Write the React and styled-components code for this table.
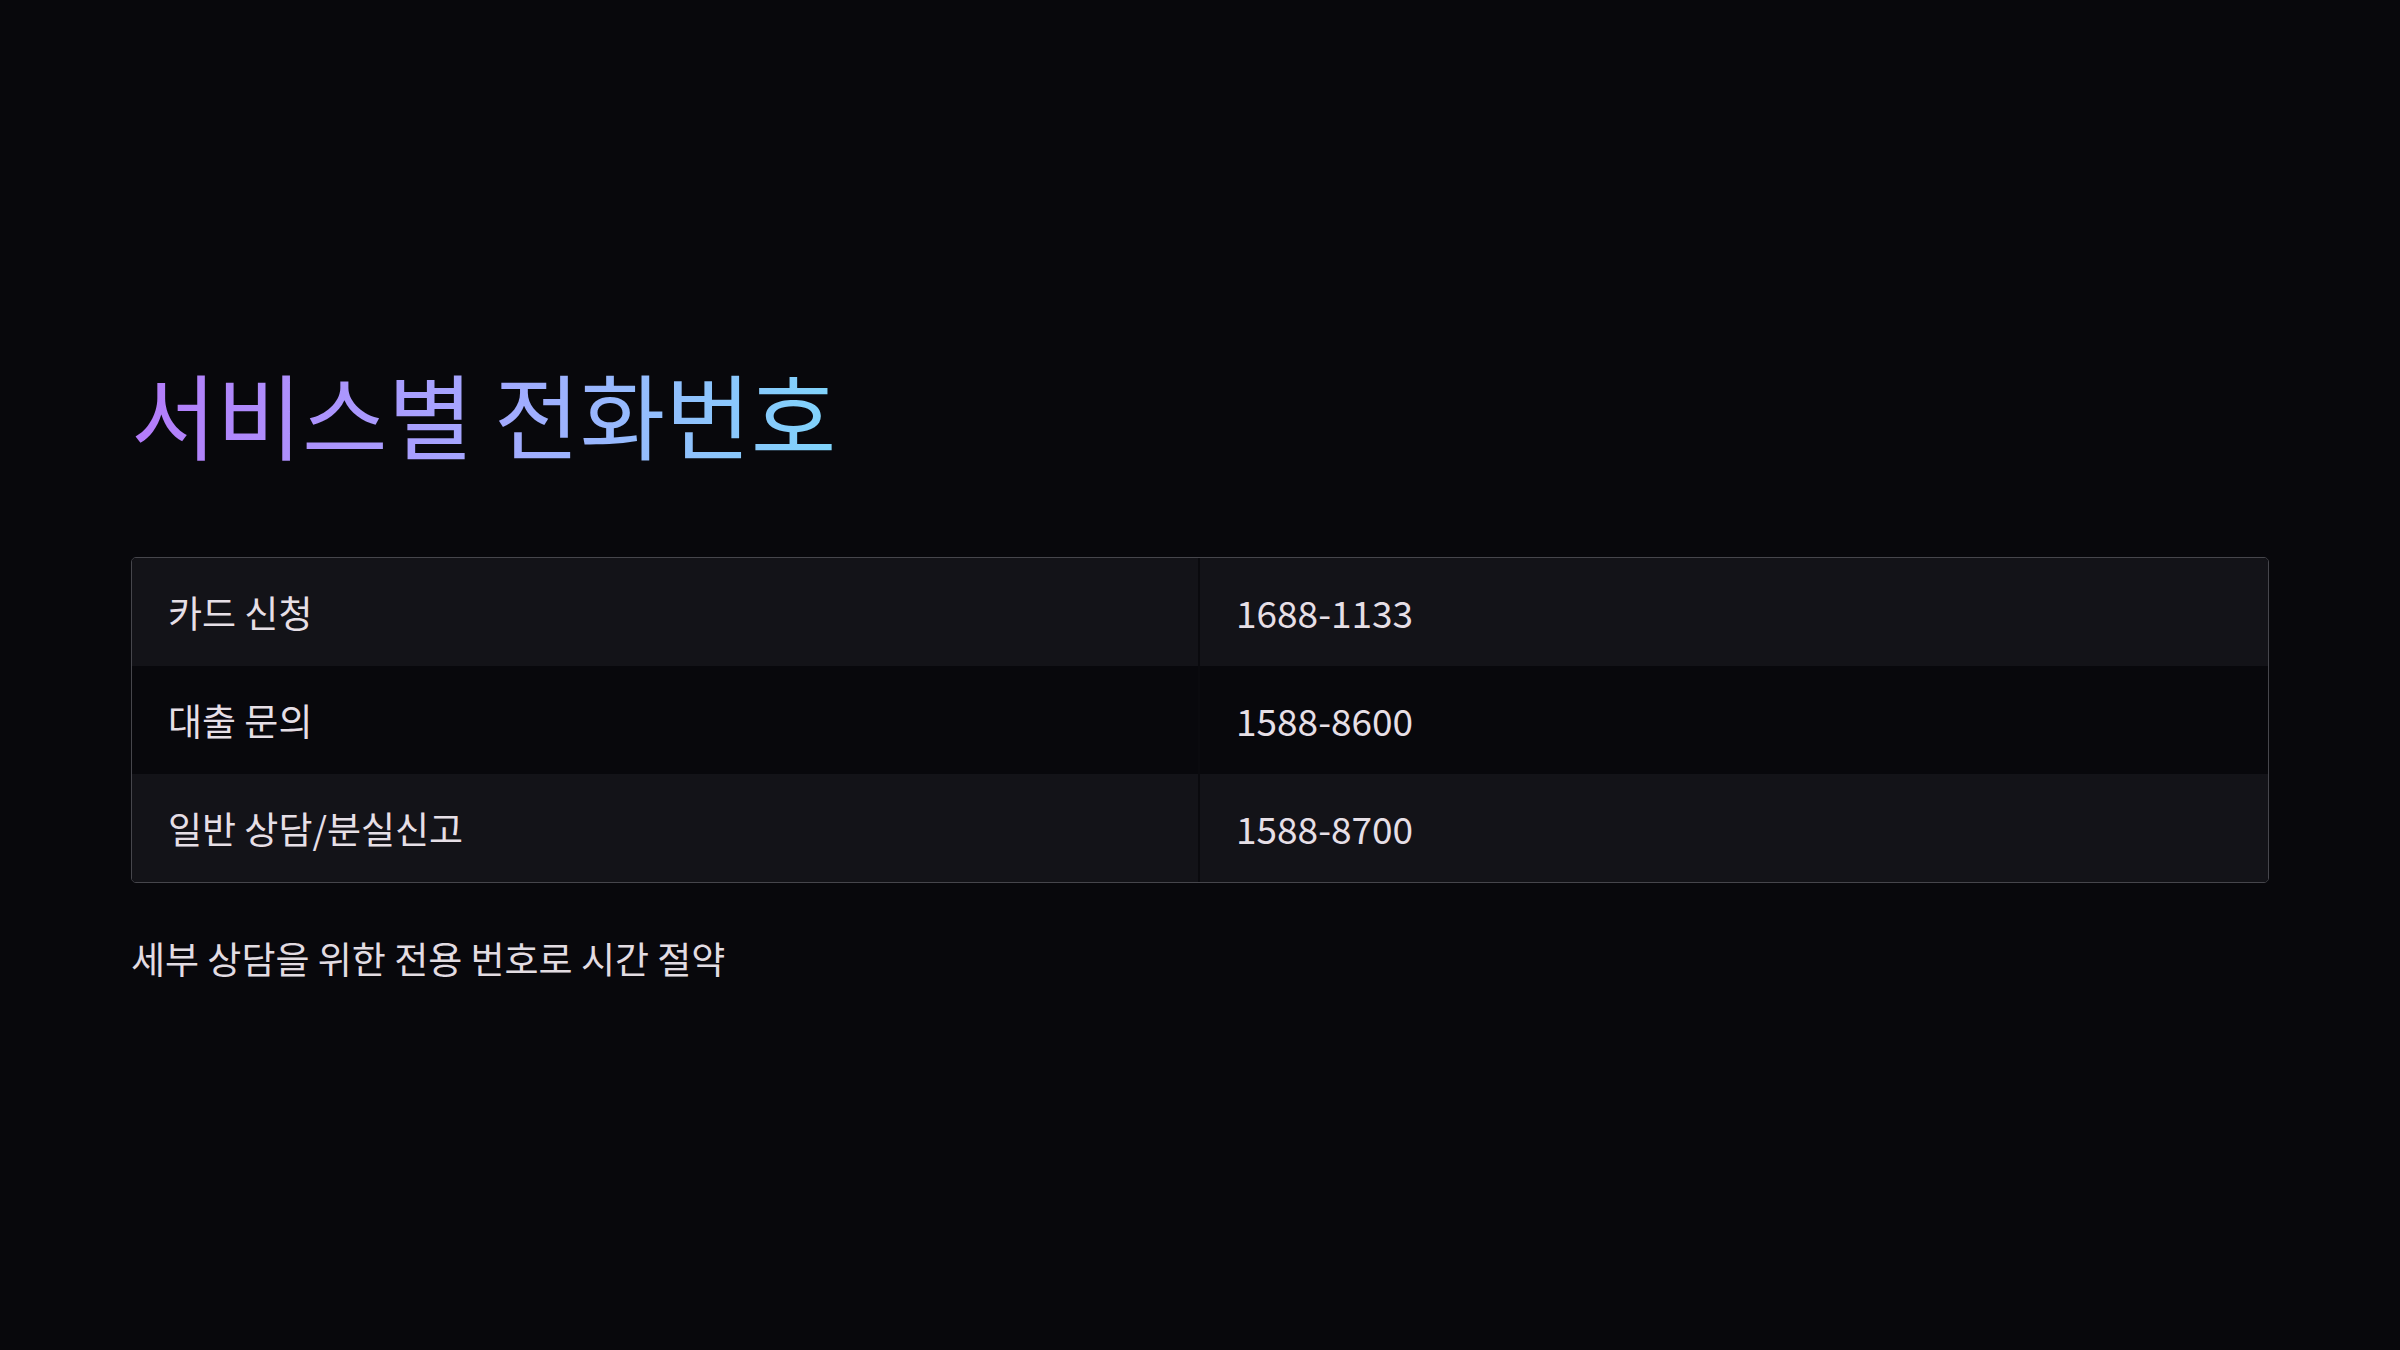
import styled, { createGlobalStyle } from "styled-components";

const rows = [
  { name: "카드 신청", phone: "1688-1133" },
  { name: "대출 문의", phone: "1588-8600" },
  { name: "일반 상담/분실신고", phone: "1588-8700" },
];

const GlobalStyle = createGlobalStyle`
  html, body {
    margin: 0;
    padding: 0;
    background: #08080c;
  }
  body {
    font-family: "Noto Sans CJK KR", "Noto Sans", sans-serif;
    color: #e6dfe6;
  }
`;

const App = () => {
  return (
    <>
      <GlobalStyle />
      <Page>
        <Title>서비스별 전화번호</Title>
        <Table>
          {rows.map((row, i) => (
            <Row key={row.phone} $odd={i % 2 === 0}>
              <Cell $divider>{row.name}</Cell>
              <Cell>{row.phone}</Cell>
            </Row>
          ))}
        </Table>
        <Note>세부 상담을 위한 전용 번호로 시간 절약</Note>
      </Page>
    </>
  );
};

const Page = styled.div`
  min-height: 100vh;
  box-sizing: border-box;
  display: flex;
  flex-direction: column;
  justify-content: center;
  padding: 0 131px 12px;
`;

const Title = styled.h1`
  margin: 0 0 83px;
  font-size: 93px;
  font-weight: 400;
  line-height: 1.3;
  align-self: flex-start;
  background: linear-gradient(90deg, #b47bfa 0%, #a5a8ff 50%, #7fd4fb 100%);
  -webkit-background-clip: text;
  background-clip: text;
  color: transparent;
`;

const Table = styled.div`
  border: 1.5px solid #46464c;
  border-radius: 5px;
  overflow: hidden;
`;

const Row = styled.div`
  display: grid;
  grid-template-columns: 1fr 1fr;
  background: ${(p) => (p.$odd ? "#131318" : "#08080c")};
`;

const Cell = styled.div`
  padding: 27px 36px;
  font-size: 37px;
  line-height: 54px;
  color: #e6dfe6;
  border-right: ${(p) => (p.$divider ? "2px solid #0a0a0e" : "none")};
`;

const Note = styled.p`
  margin: 50px 0 0;
  font-size: 37px;
  line-height: 1.4;
  color: #e2dce2;
`;

export default App;
